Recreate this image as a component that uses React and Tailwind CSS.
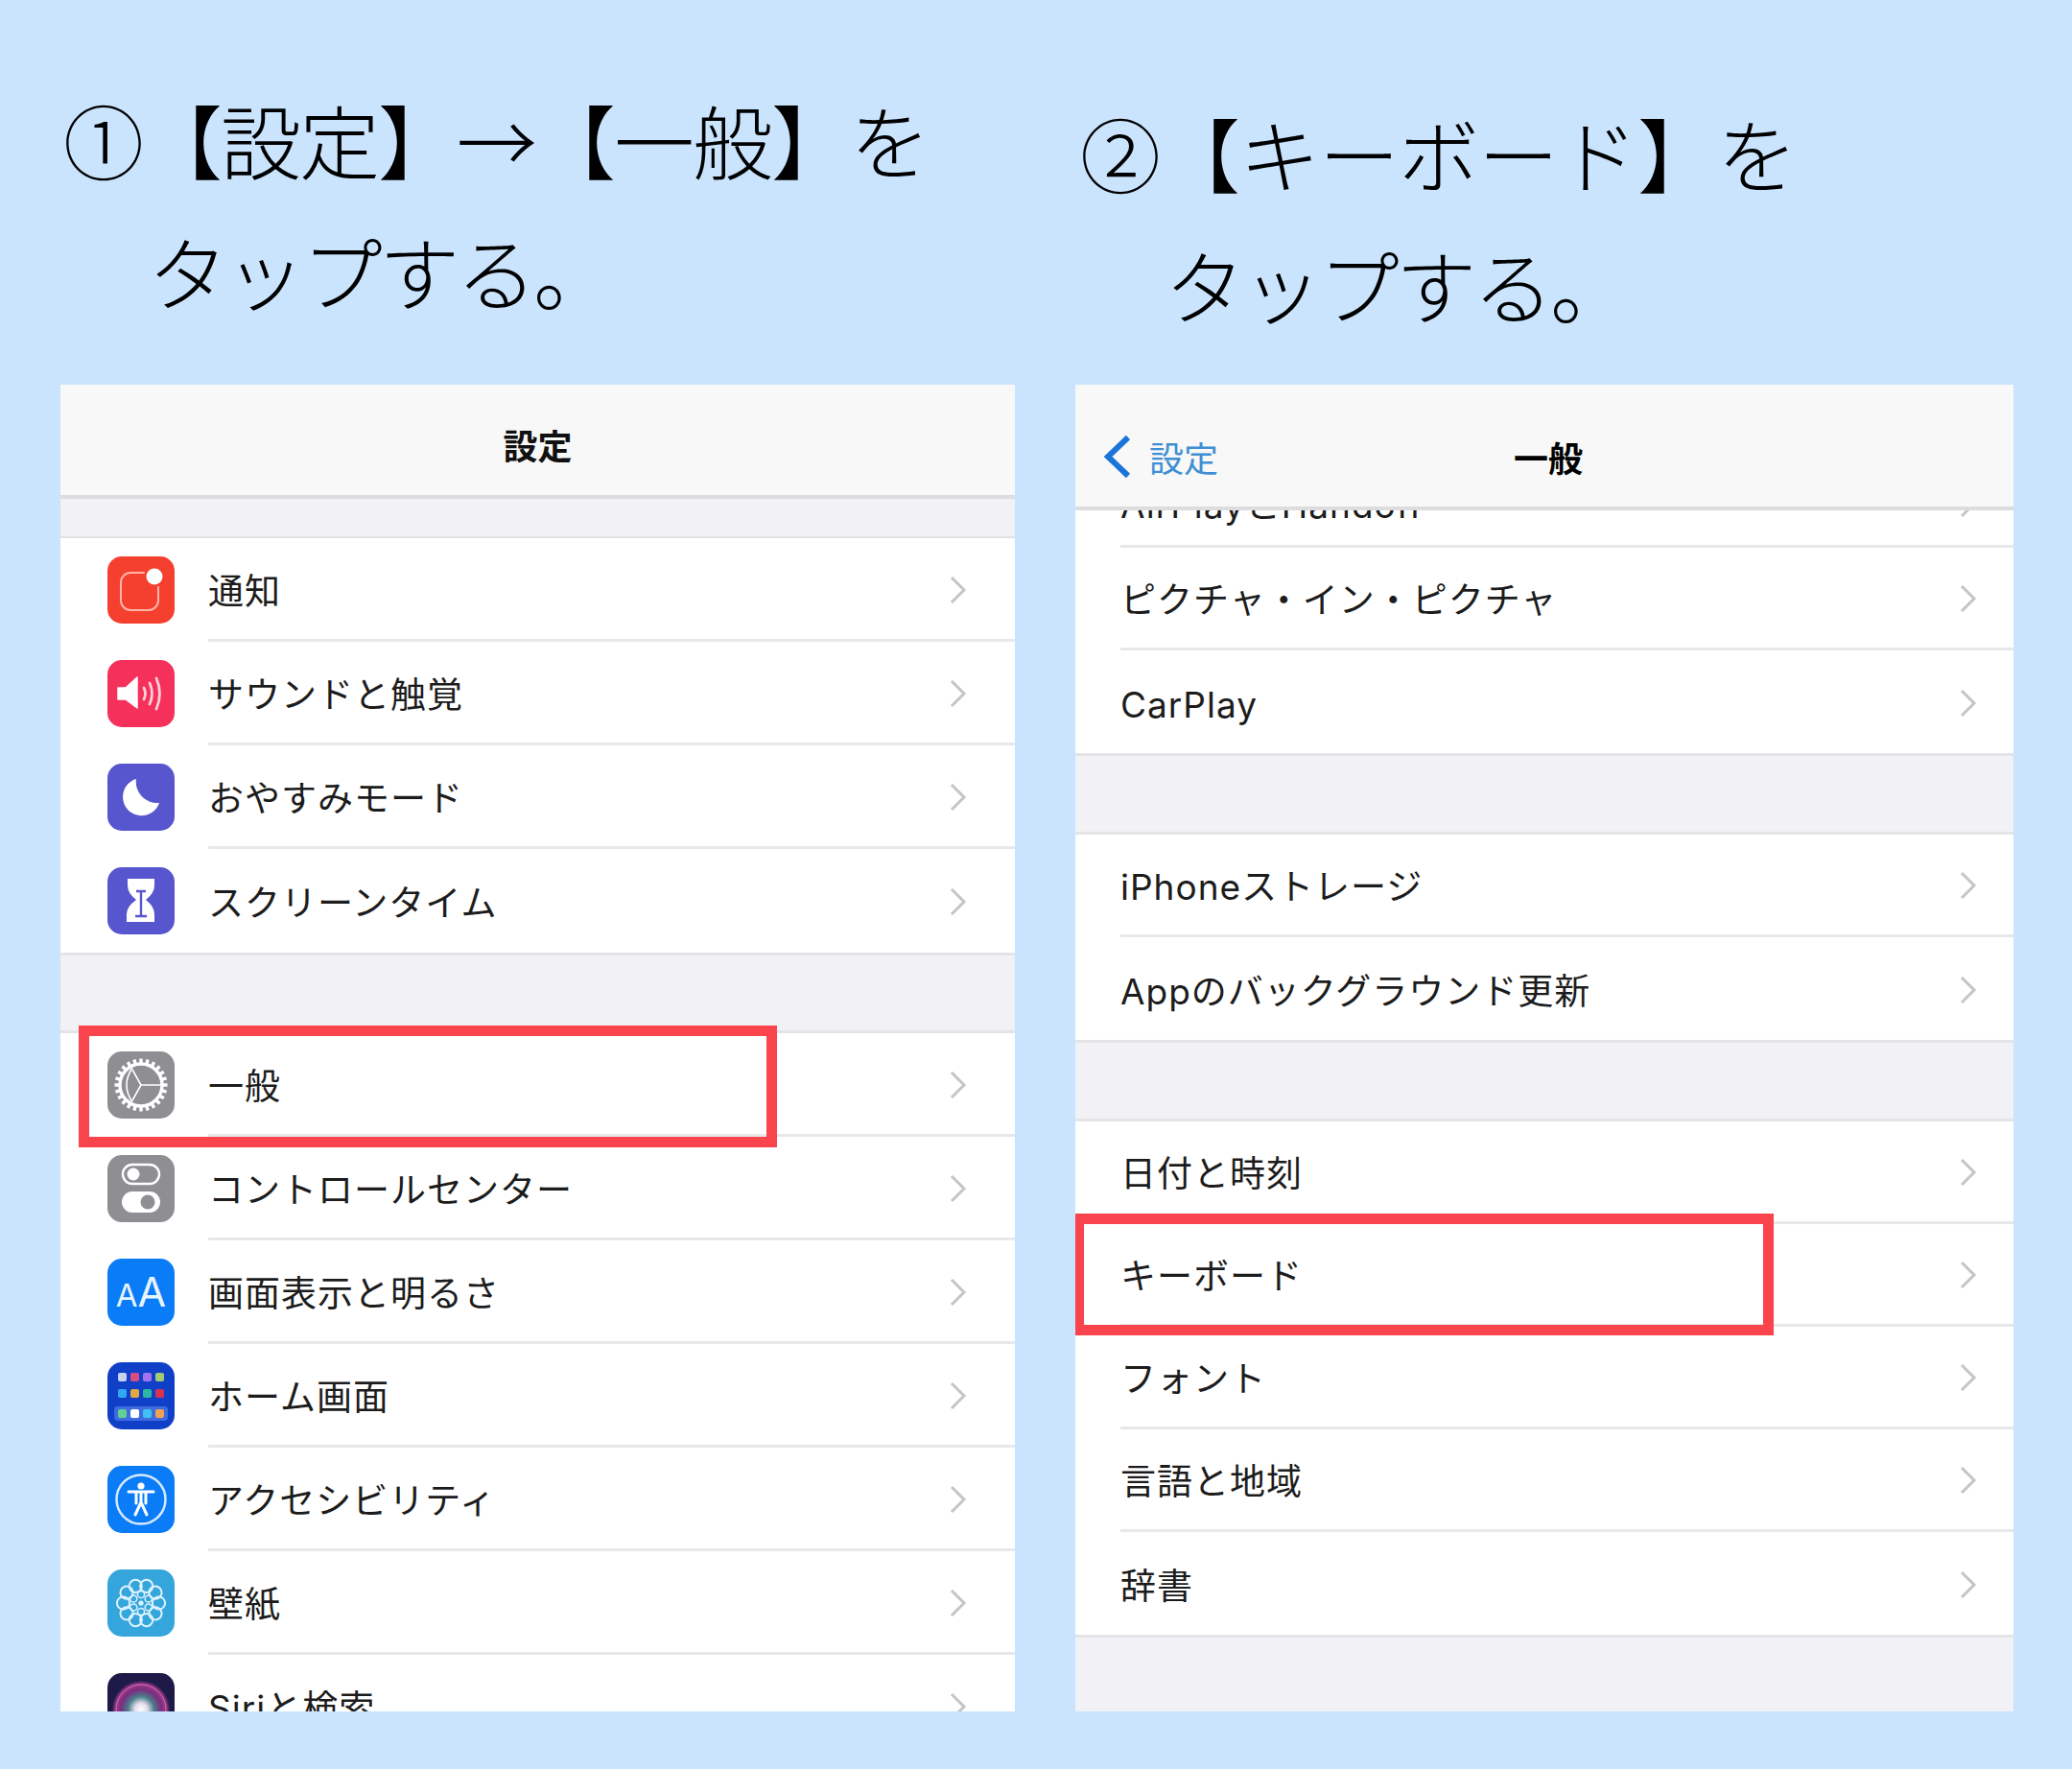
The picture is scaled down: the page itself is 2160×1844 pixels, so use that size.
const leftTop = [
  { label: '通知', icon: 'notify' },
  { label: 'サウンドと触覚', icon: 'sound' },
  { label: 'おやすみモード', icon: 'moon' },
  { label: 'スクリーンタイム', icon: 'hourglass' },
];

const leftBottom = [
  { label: '一般', icon: 'gear' },
  { label: 'コントロールセンター', icon: 'control' },
  { label: '画面表示と明るさ', icon: 'display' },
  { label: 'ホーム画面', icon: 'home' },
  { label: 'アクセシビリティ', icon: 'access' },
  { label: '壁紙', icon: 'wallpaper' },
  { label: 'Siriと検索', icon: 'siri' },
];

const homeDots = [
  { x: 11, y: 11, c: '#c9d2f2' }, { x: 24, y: 11, c: '#d94c84' }, { x: 37, y: 11, c: '#a274f2' }, { x: 50, y: 11, c: '#a3c972' },
  { x: 11, y: 28, c: '#2fa9f2' }, { x: 24, y: 28, c: '#e0a93f' }, { x: 37, y: 28, c: '#2fb8a1' }, { x: 50, y: 28, c: '#d93250' },
  { x: 11, y: 49, c: '#62d192' }, { x: 24, y: 49, c: '#ffffff' }, { x: 37, y: 49, c: '#3fc1f2' }, { x: 50, y: 49, c: '#f0a152' },
];

const angles = (n, start = 0) => Array.from({ length: n }, (_, i) => start + (i * 360) / n);
const polar = (r, deg) => ({
  x: 35 + r * Math.cos((deg * Math.PI) / 180),
  y: 35 + r * Math.sin((deg * Math.PI) / 180),
});

const IconGlyph = ({ name }) => {
  if (name === 'notify') {
    return (
      <>
        <rect x="14" y="17" width="39" height="39" rx="10" fill="none" stroke="#ffb4aa" strokeWidth="2" />
        <circle cx="49" cy="21" r="11" fill="#f5402f" />
        <circle cx="49" cy="21" r="8.5" fill="#fff" />
      </>
    );
  }
  if (name === 'sound') {
    return (
      <>
        <path d="M11 29 H19 L31 18 V50 L19 41 H11 Z" fill="#fff" stroke="#fff" strokeLinejoin="round" strokeWidth="1.5" />
        <path d="M38 29 Q41 35 38 41 M44 24 Q49 35 44 46 M51 19 Q58 35 51 51" fill="none" stroke="#ffd0da" strokeWidth="2.8" strokeLinecap="round" />
      </>
    );
  }
  if (name === 'moon') {
    return <path d="M30 16 A19.5 19.5 0 1 0 54 41 A22 22 0 0 1 30 16 Z" fill="#fff" />;
  }
  if (name === 'hourglass') {
    return (
      <>
        <path d="M21 12 H49 V19 Q49 27 40 34 Q49 41 49 49 V57 H20 V49 Q20 41 30 34 Q21 27 21 19 Z" fill="#fff" />
        <path d="M30 25 H40 M35 25 V50 M29 51 H41" stroke="#5756ce" strokeWidth="2.4" fill="none" />
      </>
    );
  }
  if (name === 'gear') {
    return (
      <>
        <circle cx="35" cy="35" r="22" fill="none" stroke="#fff" strokeWidth="3.4" />
        {angles(24).map(a => {
          const from = polar(22, a);
          const to = polar(27.5, a);
          return <line key={a} x1={from.x} y1={from.y} x2={to.x} y2={to.y} stroke="#fff" strokeWidth="3.4" />;
        })}
        <path d="M35 35 H56 M35 35 L26 19 M35 35 L26 51" stroke="#fff" strokeWidth="1.6" fill="none" />
        <path d="M26 17 Q14 35 26 53" stroke="#fff" strokeWidth="1.6" fill="none" />
      </>
    );
  }
  if (name === 'control') {
    return (
      <>
        <rect x="16" y="10" width="38" height="20" rx="10" fill="none" stroke="#fff" strokeWidth="2.4" />
        <circle cx="27" cy="20" r="6.5" fill="#fff" />
        <rect x="15" y="38" width="40" height="22" rx="11" fill="#fff" />
        <circle cx="42" cy="49" r="7.5" fill="#8e8e93" />
      </>
    );
  }
  if (name === 'home') {
    return (
      <>
        <rect x="7" y="46" width="56" height="15" rx="4" fill="#3f6be0" />
        {homeDots.map(d => <rect key={`${d.x}-${d.y}`} x={d.x} y={d.y} width="9" height="9" rx="2" fill={d.c} />)}
      </>
    );
  }
  if (name === 'access') {
    return (
      <>
        <circle cx="35" cy="35" r="25.5" fill="none" stroke="#d5e9ff" strokeWidth="2.5" />
        <circle cx="35" cy="21" r="3.6" fill="#fff" />
        <path d="M22 27 H48 M35 27 V38 M35 38 L29 51 M35 38 L41 51 M30 28 V39 M40 28 V39" stroke="#fff" strokeWidth="3" strokeLinecap="round" fill="none" />
      </>
    );
  }
  if (name === 'wallpaper') {
    return (
      <>
        {angles(10).map(a => {
          const p = polar(18.5, a);
          return <circle key={a} cx={p.x} cy={p.y} r="6.6" fill="none" stroke="#def3ff" strokeWidth="2" />;
        })}
        {angles(6, 30).map(a => {
          const p = polar(9, a);
          return <circle key={a} cx={p.x} cy={p.y} r="3.6" fill="none" stroke="#def3ff" strokeWidth="1.5" />;
        })}
        <circle cx="35" cy="35" r="2.6" fill="#def3ff" />
      </>
    );
  }
  if (name === 'siri') {
    return (
      <>
        <defs>
          <radialGradient id="siriGlow" cx="50%" cy="50%" r="50%">
            <stop offset="0%" stopColor="#ffffff" />
            <stop offset="22%" stopColor="#e6dcec" />
            <stop offset="45%" stopColor="#4a7f8a" />
            <stop offset="70%" stopColor="#7a2c80" />
            <stop offset="88%" stopColor="#a03c88" />
            <stop offset="100%" stopColor="#2a1b50" />
          </radialGradient>
        </defs>
        <circle cx="35" cy="38" r="30" fill="url(#siriGlow)" />
        <circle cx="35" cy="38" r="26" fill="none" stroke="#d06aa8" strokeWidth="1" />
      </>
    );
  }
  return null;
};

const iconColors = {
  notify: 'bg-[#f5402f]',
  sound: 'bg-[#f5305a]',
  moon: 'bg-[#5756ce]',
  hourglass: 'bg-[#5756ce]',
  gear: 'bg-[#8e8e93]',
  control: 'bg-[#8e8e93]',
  display: 'bg-[#0a7cf8]',
  home: 'bg-[#1140c8]',
  access: 'bg-[#0a7cf8]',
  wallpaper: 'bg-[#34a6dc]',
  siri: 'bg-[#1d1a48]',
};

const AppIcon = ({ name }) => (
  <div className={`w-[70px] h-[70px] rounded-[15px] overflow-hidden shrink-0 ${iconColors[name]}`}>
    {name === 'display' ? (
      <div className="flex items-baseline justify-center h-full pt-[9px] text-[#e8f4ff] font-['Inter',sans-serif] font-normal">
        <span className="text-[33px] leading-[50px]">A</span>
        <span className="text-[43px] leading-[50px]">A</span>
      </div>
    ) : (
      <svg viewBox="0 0 70 70" className="w-full h-full"><IconGlyph name={name} /></svg>
    )}
  </div>
);

const Chevron = () => (
  <svg width="18" height="30" viewBox="0 0 18 30" className="shrink-0">
    <path d="M2 2 L15 15 L2 28" fill="none" stroke="#c5c5c8" strokeWidth="3" />
  </svg>
);

const SettingsRow = ({ label, icon, last, rowHeight, pad }) => (
  <div className={`flex items-center bg-white ${rowHeight} ${pad}`}>
    {icon && <div className="w-[105px] shrink-0"><AppIcon name={icon} /></div>}
    <div className={`flex-1 h-full flex items-center justify-between pt-[2px] ${last ? '' : 'border-b-[3px] border-[#e8e8ea]'}`}>
      <span className="pt-[4px] text-[37px] text-[#1c1c1c] tracking-[1px] font-['Inter','Noto_Sans_CJK_JP',sans-serif]">{label}</span>
      {icon ? <span className="pr-[50px]"><Chevron /></span> : <span className="pr-[38px]"><Chevron /></span>}
    </div>
  </div>
);

const Title = ({ first, className }) => (
  <div className={`h-[401px] text-[84px] leading-[137px] text-black font-light whitespace-nowrap ${className}`}>
    <div>{first}</div>
    <div className="pl-[88px] tracking-[-3.6px]">タップする。</div>
  </div>
);

const RedBox = ({ className }) => (
  <div className={`absolute h-[127px] border-[11px] border-[#f9434d] ${className}`} />
);

export default function App() {
  return (
    <div className="w-[2160px] h-[1844px] bg-[#cae4fe] flex font-['Noto_Sans_CJK_JP','Noto_Sans',sans-serif] overflow-hidden">
      {/* step 1 */}
      <div className="w-[995px] ml-[63px] shrink-0">
        <Title first="①【設定】→【一般】を" className="pt-[76px] pl-[3px] tracking-[-2px]" />
        <div className="relative h-[1383px] bg-[#f1f1f6] overflow-hidden">
          <div className="h-[119px] bg-[#f8f8f8] border-b-4 border-[#dddddf] flex items-center justify-center pt-[8px]">
            <span className="text-[36px] font-bold text-[#111111]">設定</span>
          </div>
          <div className="h-[41px] border-b-2 border-[#e2e2e6]" />
          {leftTop.map((row, i) => (
            <SettingsRow key={row.label} {...row} last={i === leftTop.length - 1} rowHeight="h-[108px]" pad="pl-[49px]" />
          ))}
          <div className="h-[84px] border-y-[3px] border-[#e4e4e8]" />
          {leftBottom.map(row => (
            <SettingsRow key={row.label} {...row} rowHeight="h-[108px]" pad="pl-[49px]" />
          ))}
          <RedBox className="left-[19px] top-[668px] w-[728px]" />
        </div>
      </div>

      {/* step 2 */}
      <div className="w-[978px] ml-[63px] shrink-0">
        <Title first="②【キーボード】を" className="pt-[90px] pl-[5px] tracking-[-1px]" />
        <div className="relative h-[1383px] bg-[#f1f1f6] overflow-hidden">
          <div className="relative z-10 h-[131px] bg-[#f8f8f8] border-b-4 border-[#dddddf] grid grid-cols-[1fr_auto_1fr] items-center pt-[22px] pl-[29px] pr-[21px]">
            <div className="flex items-center gap-[18px]">
              <svg width="30" height="46" viewBox="0 0 30 46">
                <path d="M26 3 L5 23 L26 43" fill="none" stroke="#1b74d8" strokeWidth="6" />
              </svg>
              <span className="text-[36px] text-[#3f8fd2]">設定</span>
            </div>
            <span className="text-[36px] font-bold text-black">一般</span>
            <div />
          </div>
          <div className="-mt-[52px]">
            <SettingsRow label="AirPlayとHandoff" rowHeight="h-[91px]" pad="pl-[47px]" />
            <SettingsRow label="ピクチャ・イン・ピクチャ" rowHeight="h-[107px]" pad="pl-[47px]" />
            <SettingsRow label="CarPlay" last rowHeight="h-[107px]" pad="pl-[47px]" />
          </div>
          <div className="h-[85px] border-y-[3px] border-[#e4e4e8]" />
          <SettingsRow label="iPhoneストレージ" rowHeight="h-[107px]" pad="pl-[47px]" />
          <SettingsRow label="Appのバックグラウンド更新" last rowHeight="h-[107px]" pad="pl-[47px]" />
          <div className="h-[85px] border-y-[3px] border-[#e4e4e8]" />
          <SettingsRow label="日付と時刻" rowHeight="h-[107px]" pad="pl-[47px]" />
          <SettingsRow label="キーボード" rowHeight="h-[107px]" pad="pl-[47px]" />
          <SettingsRow label="フォント" rowHeight="h-[107px]" pad="pl-[47px]" />
          <SettingsRow label="言語と地域" rowHeight="h-[107px]" pad="pl-[47px]" />
          <SettingsRow label="辞書" last rowHeight="h-[107px]" pad="pl-[47px]" />
          <div className="border-t-[3px] border-[#e4e4e8]" />
          <RedBox className="-left-[2px] top-[864px] w-[730px]" />
        </div>
      </div>
    </div>
  );
}
